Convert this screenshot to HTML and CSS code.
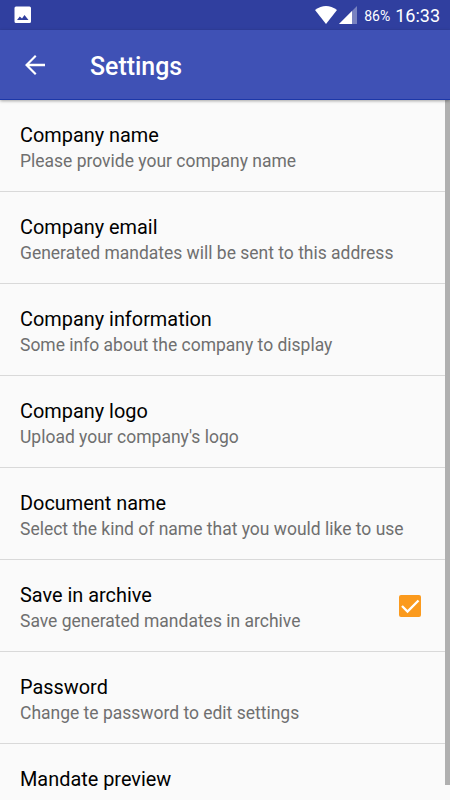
FILE: index.html
```html
<!DOCTYPE html>
<html lang="en">
<head>
<meta charset="utf-8">
<title>Settings</title>
<link rel="stylesheet" href="styles.css">
</head>
<body>
<div class="status">
  <svg class="picture" viewBox="0 0 18 18"><path fill="#fff" fill-rule="evenodd" d="M2 .5h13.500a1.500 1.500 0 0 1 1.500 1.500v13.500a1.500 1.500 0 0 1-1.500 1.500H2a1.500 1.500 0 0 1-1.500-1.500V2A1.500 1.500 0 0 1 2 .5zM5.800 10.500 3 14h11.500l-4-5L8 12.500z"/></svg>
  <div class="indicators">
    <svg class="wifi" viewBox="0 0 22 18"><path fill="#fff" d="M0 4Q11-4 22 4L11 18z"/></svg>
    <svg class="signal" viewBox="0 0 18 18"><path fill="#fff" fill-opacity=".35" d="M18 0v18H0z"/><path fill="#fff" d="M13 5v13H0z"/></svg>
    <span class="battery">86%</span>
    <span class="clock">16:33</span>
  </div>
</div>
<header class="toolbar">
  <svg class="back" viewBox="0 0 20 20"><path fill="#fff" d="M20 8.800H4.300l7.200-7.200L10 0 0 10l10 10 1.500-1.600L4.300 11.200H20z"/></svg>
  <h1>Settings</h1>
</header>
<main class="list">
  <div class="row"><div><h2>Company name</h2><p>Please provide your company name</p></div></div>
  <div class="row"><div><h2>Company email</h2><p>Generated mandates will be sent to this address</p></div></div>
  <div class="row"><div><h2>Company information</h2><p>Some info about the company to display</p></div></div>
  <div class="row"><div><h2>Company logo</h2><p>Upload your company's logo</p></div></div>
  <div class="row"><div><h2>Document name</h2><p>Select the kind of name that you would like to use</p></div></div>
  <div class="row"><div><h2>Save in archive</h2><p>Save generated mandates in archive</p></div>
    <svg class="check" viewBox="0 0 22 22"><rect width="22" height="22" rx="2" fill="#fb9a1d"/><path d="m3 11 5.500 5.500L19.500 5.500" fill="none" stroke="#fff" stroke-width="2.300"/></svg></div>
  <div class="row"><div><h2>Password</h2><p>Change te password to edit settings</p></div></div>
  <div class="row"><div><h2>Mandate preview</h2></div></div>
  <div class="scrollbar"></div>
</main>
</body>
</html>
```
FILE: styles.css
```css
* { box-sizing: border-box; }
body { margin: 0; height: 800px; overflow: hidden; display: flex; flex-direction: column; background: #fafafa; font-family: Roboto, sans-serif; }
h1, h2, p { margin: 0; font-weight: 400; white-space: nowrap; }
.status { height: 30px; flex: none; background: #303f9f; color: #fff; display: flex; align-items: center; justify-content: space-between; padding: 0 10px 0 14px; }
.picture { width: 18px; height: 18px; }
.indicators { display: flex; align-items: center; }
.wifi { width: 22px; height: 18px; }
.signal { width: 18px; height: 18px; margin-left: 2px; }
.battery { font-size: 14px; margin: 1px 0 0 7px; }
.clock { font-size: 18px; margin-left: 5px; }
.toolbar { position: relative; z-index: 1; height: 70px; flex: none; background: #3f51b5; color: #fff; display: flex; align-items: center; padding-left: 25px; border-bottom: 1px solid #1c37a8; box-shadow: 0 1px 3px rgba(0,0,0,.35); }
.back { width: 20px; height: 20px; }
.toolbar h1 { font-size: 24.900px; font-weight: 500; margin-left: 45px; line-height: 30px; padding-top: 5px; }
.list { position: relative; flex: 1; overflow: hidden; }
.row { height: 92px; border-bottom: 1px solid #d9d9d9; padding: 23px 29px 0 20px; display: flex; justify-content: space-between; }
.row h2 { font-size: 19.900px; line-height: 26px; color: #000; }
.row p { font-size: 17.490px; line-height: 25px; color: #6f6f6f; }
.check { width: 22px; height: 22px; margin-top: 12px; }
.scrollbar { position: absolute; right: 0; top: 0; width: 5px; height: 685px; background: #b0b0b0; }
```
